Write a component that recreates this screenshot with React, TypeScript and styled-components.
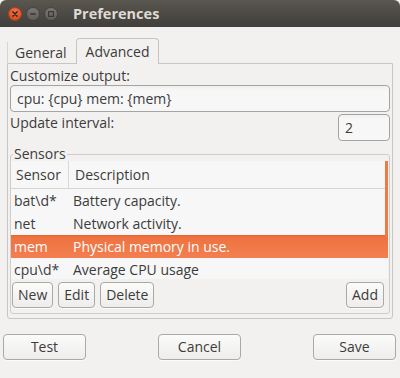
import * as React from "react"
import styled, { createGlobalStyle } from "styled-components"

const GlobalStyle = createGlobalStyle`
  html, body {
    margin: 0;
    padding: 0;
    background: #f2f1f0;
  }
  body {
    font-family: "Open Sans", "Noto Sans", sans-serif;
    font-size: 14px;
    color: #3c3c3c;
  }
`

const Window = styled.div`
  width: 400px;
  height: 378px;
  display: flex;
  flex-direction: column;
  background: #f2f1f0;
  overflow: hidden;
`

const TitleBar = styled.div`
  height: 27px;
  flex: none;
  display: flex;
  align-items: center;
  padding-left: 8px;
  background: linear-gradient(#5a5650, #403f3b);
  border-radius: 6px 6px 0 0;
`

const Controls = styled.div`
  display: flex;
  gap: 4px;
`

const Title = styled.div`
  margin-left: 15px;
  font-weight: bold;
  font-size: 14.5px;
  color: #dfdbd2;
  line-height: 27px;
`

const Body = styled.div`
  flex: 1;
  display: flex;
  flex-direction: column;
  padding: 11px 7px 0;
`

const TabBar = styled.div`
  height: 25px;
  display: flex;
  align-items: flex-end;
  position: relative;
  z-index: 1;
`

const Tab = styled.div<{ $active?: boolean }>`
  box-sizing: border-box;
  height: ${p => (p.$active ? "26px" : "21px")};
  margin-bottom: ${p => (p.$active ? "-1px" : "0")};
  padding: ${p => (p.$active ? "3px 9px 0" : "1px 9px 0 7px")};
  line-height: 19px;
  border: ${p => (p.$active ? "1px solid #c6c4c1" : "none")};
  border-left: 1px solid ${p => (p.$active ? "#c6c4c1" : "#d8d6d3")};
  border-bottom: none;
  border-radius: ${p => (p.$active ? "4px 4px 0 0" : "0")};
  background: #f2f1f0;
  color: #3c3c3c;
`

const Panel = styled.div`
  box-sizing: border-box;
  height: 256px;
  border: 1px solid #c8c6c3;
  border-radius: 0 0 3px 3px;
  padding: 3px 2px 4px;
  display: flex;
  flex-direction: column;
`

const Label = styled.div`
  line-height: 18px;
`

const Entry = styled.div<{ $width?: number }>`
  box-sizing: border-box;
  height: 27px;
  ${p => (p.$width ? `width: ${p.$width}px;` : "")}
  border: 1px solid #a5a4a1;
  border-radius: 4px;
  background: linear-gradient(#f0f0ef, #f7f7f7 4px);
  padding: 0 6px;
  line-height: 25px;
  color: #3c3c3c;
`

const Row = styled.div`
  display: flex;
  justify-content: space-between;
  align-items: flex-start;
  margin-top: 2px;
`

const Frame = styled.fieldset`
  margin: 6px 0 0;
  padding: 0;
  border: 1px solid #cfcdca;
  border-radius: 3px;
  min-width: 0;
  flex: 1;
  display: flex;
  flex-direction: column;
`

const Legend = styled.legend`
  padding: 0 1px;
  margin-left: 2px;
  line-height: 14px;
`

const Tree = styled.div`
  position: relative;
  height: 118px;
  overflow: hidden;
  background: #f7f7f7;
  margin-right: 1px;
`

const HeaderRow = styled.div`
  display: grid;
  grid-template-columns: 57px 1fr;
  height: 27px;
  border-bottom: 1px solid #d6d6d5;
`

const HeaderCell = styled.div<{ $divider?: boolean }>`
  line-height: 27px;
  padding-left: ${p => (p.$divider ? "6px" : "5px")};
  border-left: ${p => (p.$divider ? "1px solid #d9d9d8" : "none")};
`

const DataRow = styled.div<{ $selected?: boolean }>`
  display: grid;
  grid-template-columns: 57px 1fr;
  height: 23px;
  line-height: 23px;
  box-sizing: border-box;
  color: ${p => (p.$selected ? "#ffffff" : "#3c3c3c")};
  background: ${p =>
    p.$selected ? "linear-gradient(#e26230, #ee7240 2px, #f37f50)" : "transparent"};
`

const Cell = styled.div<{ $first?: boolean }>`
  padding-left: ${p => (p.$first ? "3px" : "5px")};
  white-space: nowrap;
`

const ScrollIndicator = styled.div`
  position: absolute;
  right: 0;
  top: 0;
  width: 3px;
  height: 76px;
  background: #ef7a48;
`

const ButtonRow = styled.div`
  display: flex;
  gap: 5px;
  padding: 3px 5px 3px 1px;
`

const Button = styled.button<{ $width?: number }>`
  box-sizing: border-box;
  height: 26px;
  ${p => (p.$width ? `width: ${p.$width}px;` : "")}
  padding: 0 5px;
  border: 1px solid #aaa9a6;
  border-radius: 4px;
  background: linear-gradient(#fbfbfa, #eeedec);
  box-shadow: 0 1px 0 rgba(255, 255, 255, 0.7);
  font-family: inherit;
  font-size: 14px;
  color: #3c3c3c;
  line-height: 24px;
`

const Spacer = styled.div`
  flex: 1;
`

const DialogButtons = styled.div`
  display: flex;
  justify-content: space-between;
  margin: 15px -3px 0 -4px;
`

const CloseIcon = () => (
  <svg width="14" height="14" viewBox="0 0 14 14">
    <defs>
      <radialGradient id="cg" cx="50%" cy="35%" r="65%">
        <stop offset="0%" stopColor="#f6794a" />
        <stop offset="100%" stopColor="#d9461a" />
      </radialGradient>
    </defs>
    <circle cx="7" cy="7" r="6.5" fill="url(#cg)" stroke="#a9401a" strokeWidth="0.8" />
    <path d="M4.9 4.9 L9.1 9.1 M9.1 4.9 L4.9 9.1" stroke="#3b2a22" strokeWidth="1.5" strokeLinecap="round" />
  </svg>
)

const GrayCircle = ({ children }: { children: React.ReactNode }) => (
  <svg width="14" height="14" viewBox="0 0 14 14">
    <defs>
      <linearGradient id="gg" x1="0" y1="0" x2="0" y2="1">
        <stop offset="0%" stopColor="#7a7974" />
        <stop offset="100%" stopColor="#5d5c58" />
      </linearGradient>
    </defs>
    <circle cx="7" cy="7" r="6.5" fill="url(#gg)" stroke="#3f3e3a" strokeWidth="0.8" />
    {children}
  </svg>
)

const sensors = [
  { name: "bat\\d*", desc: "Battery capacity." },
  { name: "net", desc: "Network activity." },
  { name: "mem", desc: "Physical memory in use.", selected: true },
  { name: "cpu\\d*", desc: "Average CPU usage" },
]

export default function App() {
  return (
    <Window>
      <GlobalStyle />
      <TitleBar>
        <Controls>
          <CloseIcon />
          <GrayCircle>
            <path d="M4.3 7 H9.7" stroke="#3a3935" strokeWidth="1.6" />
          </GrayCircle>
          <GrayCircle>
            <rect x="4.6" y="4.6" width="4.8" height="4.8" fill="none" stroke="#3a3935" strokeWidth="1.2" />
          </GrayCircle>
        </Controls>
        <Title>Preferences</Title>
      </TitleBar>
      <Body>
        <TabBar>
          <Tab>General</Tab>
          <Tab $active>Advanced</Tab>
        </TabBar>
        <Panel>
          <Label>Customize output:</Label>
          <Entry>cpu: {"{cpu}"} mem: {"{mem}"}</Entry>
          <Row>
            <Label>Update interval:</Label>
            <Entry $width={52}>2</Entry>
          </Row>
          <Frame>
            <Legend>Sensors</Legend>
            <Tree>
              <HeaderRow>
                <HeaderCell>Sensor</HeaderCell>
                <HeaderCell $divider>Description</HeaderCell>
              </HeaderRow>
              {sensors.map(s => (
                <DataRow key={s.name} $selected={s.selected}>
                  <Cell $first>{s.name}</Cell>
                  <Cell>{s.desc}</Cell>
                </DataRow>
              ))}
              <ScrollIndicator />
            </Tree>
            <ButtonRow>
              <Button>New</Button>
              <Button>Edit</Button>
              <Button>Delete</Button>
              <Spacer />
              <Button>Add</Button>
            </ButtonRow>
          </Frame>
        </Panel>
        <DialogButtons>
          <Button $width={83}>Test</Button>
          <Button $width={83}>Cancel</Button>
          <Button $width={83}>Save</Button>
        </DialogButtons>
      </Body>
    </Window>
  )
}
